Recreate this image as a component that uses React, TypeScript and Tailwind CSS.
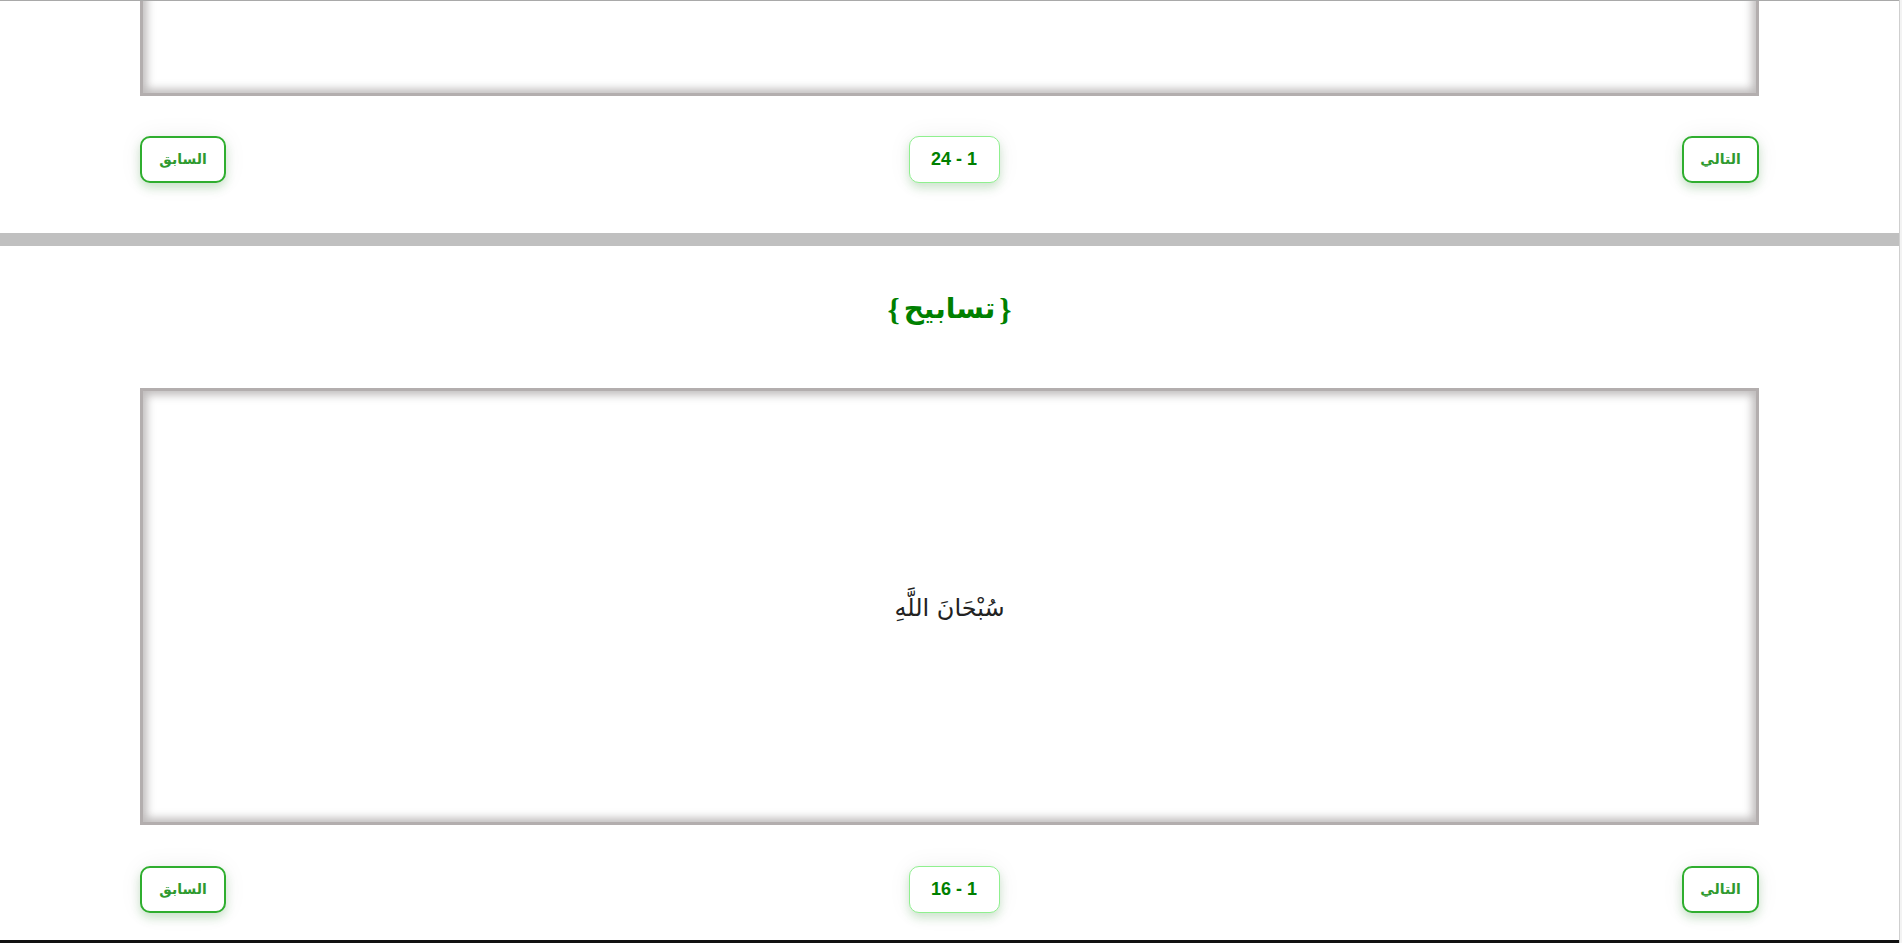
import React from "react";

function NavRow({ range }: { range: string }) {
  return (
    <div className="flex items-center justify-between h-[47px]">
      <button className="w-[77px] h-[47px] rounded-[10px] border-2 border-[#2fae2f] bg-white text-[14px] font-bold text-[#2f9a2f] shadow-[0_5px_10px_rgba(40,150,40,0.22),0_0_24px_rgba(0,0,0,0.06)] [font-family:'DejaVu_Sans',sans-serif]">
        التالي
      </button>
      <div className="w-[91px] h-[47px] rounded-[10px] border border-[#8ff08f] bg-white flex items-center justify-center text-[18px] font-bold text-[#008000] shadow-[0_5px_10px_rgba(40,150,40,0.2),0_0_24px_rgba(0,0,0,0.06)] [font-family:'Liberation_Sans',Arial,sans-serif]">
        {range}
      </div>
      <button className="w-[86px] h-[47px] rounded-[10px] border-2 border-[#2fae2f] bg-white text-[14px] font-bold text-[#2f9a2f] shadow-[0_5px_10px_rgba(40,150,40,0.22),0_0_24px_rgba(0,0,0,0.06)] [font-family:'DejaVu_Sans',sans-serif]">
        السابق
      </button>
    </div>
  );
}

const boxCls =
  "bg-white border-[3px] border-[#b3aeae] shadow-[inset_0_0_9px_4px_rgba(170,165,165,0.75)]";

export default function App() {
  return (
    <div className="w-[1902px] h-[943px] overflow-hidden bg-white flex [font-family:'DejaVu_Sans',sans-serif]">
      <div dir="rtl" className="w-[1899px] h-[943px] flex flex-col border-t border-[#a9a9a9] border-b-[3px] border-b-[#111]">
        {/* top section */}
        <div className="px-[140px]">
          <div className="h-[95px] overflow-hidden flex flex-col justify-end">
            <div className={`h-[437px] shrink-0 ${boxCls}`} />
          </div>
          <div className="mt-[40px]">
            <NavRow range="1 - 24" />
          </div>
        </div>
        <div className="mt-[50px] h-[13px] bg-[#c0c0c0]" />
        {/* second section */}
        <div className="px-[140px]">
          <h2 className="h-[142px] flex items-center justify-center text-[31px] font-bold text-[#008000] leading-none pb-[16px] [font-family:'Liberation_Serif','DejaVu_Sans',serif]">
            <span>{"{"}</span>
            <span className="mx-[4px] text-[28px] [font-family:'DejaVu_Sans',sans-serif]">تسابيح</span>
            <span>{"}"}</span>
          </h2>
          <div className={`h-[437px] flex items-center justify-center ${boxCls}`}>
            <p className="text-[24px] text-[#222] mt-[2px]">سُبْحَانَ اللَّهِ</p>
          </div>
          <div className="mt-[41px]">
            <NavRow range="1 - 16" />
          </div>
        </div>
      </div>
      <div className="w-[3px] h-[943px] border-l border-[#cfcfcf] bg-[#f3f3f3]" />
    </div>
  );
}
